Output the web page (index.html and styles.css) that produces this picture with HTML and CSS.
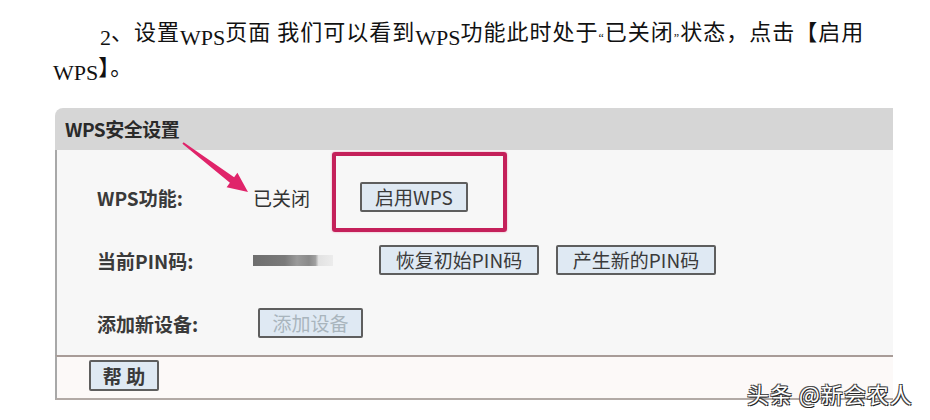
FILE: index.html
```html
<!DOCTYPE html>
<html lang="zh-CN">
<head>
<meta charset="utf-8">
<title>WPS安全设置</title>
<link rel="stylesheet" href="styles.css">
</head>
<body>
<p class="intro"><span class="lat">2</span>、设置<span class="lat">WPS</span>页面 我们可以看到<span class="lat">WPS</span>功能此时处于<span class="q">“</span>已关闭<span class="q">”</span>状态，点击【启用<br><span class="lat">WPS</span>】。</p>

<section class="panel">
  <header class="panel-head">WPS安全设置</header>
  <div class="panel-body">
    <div class="row">
      <span class="label">WPS功能:</span>
      <span class="state">已关闭</span>
      <button class="btn btn-enable">启用WPS</button>
    </div>
    <div class="row">
      <span class="label">当前PIN码:</span>
      <span class="pin-bar"></span>
      <button class="btn btn-pin">恢复初始PIN码</button>
      <button class="btn btn-pin">产生新的PIN码</button>
    </div>
    <div class="row">
      <span class="label">添加新设备:</span>
      <button class="btn btn-add" disabled>添加设备</button>
    </div>
  </div>
  <footer class="panel-foot">
    <button class="btn btn-help">帮 助</button>
  </footer>
  <div class="highlight"></div>
  <svg class="arrow" viewBox="0 0 85 65" width="85" height="65" aria-hidden="true">
    <polygon points="8.6,6.2 59.1,41.2 62.4,36.8 73,56 51.6,51.2 54.9,46.8 7.4,7.8" fill="#e0246a"/>
  </svg>
</section>

<div class="watermark">头条 @新会农人</div>
</body>
</html>
```

FILE: styles.css
```css
* { box-sizing: border-box; }

html, body {
  margin: 0;
  padding: 0;
  background: #ffffff;
}

body {
  position: relative;
  width: 930px;
  height: 420px;
  overflow: hidden;
  font-family: "Noto Sans CJK SC", "Noto Sans", sans-serif;
}

.intro {
  margin: 0 0 0 53px;
  padding-top: 16px;
  height: 108px;
  font-size: 22px;
  line-height: 29px;
  letter-spacing: 1px;
  color: #111;
  text-indent: 47px;
  white-space: nowrap;
}

.lat {
  font-family: "Liberation Serif", serif;
  font-size: 22px;
  letter-spacing: 0;
  position: relative;
  top: 5px;
}

.q {
  font-family: "Liberation Serif", serif;
  font-size: 12px;
  position: relative;
  top: 2px;
}

.panel {
  position: relative;
  margin-left: 55px;
  width: 838px;
}

.panel-head {
  height: 42px;
  background: #d6d6d6;
  border-top-left-radius: 8px;
  padding: 3px 0 0 10px;
  font-size: 19px;
  line-height: 36px;
  font-weight: 700;
  color: #2a2a2a;
  letter-spacing: -0.5px;
}

.panel-body {
  height: 205px;
  background: #f7f7f7;
  border-left: 2px solid #a8a8a8;
  padding: 32px 0 0 40px;
  display: flex;
  flex-direction: column;
  gap: 33px;
}

.row {
  display: flex;
  align-items: center;
  height: 30px;
}

.label {
  width: 156px;
  font-size: 19px;
  font-weight: 700;
  color: #3a3a3a;
}

.state {
  width: 107px;
  font-size: 19px;
  color: #333;
}

.pin-bar {
  width: 80px;
  height: 11px;
  margin-right: 46px;
  background: linear-gradient(90deg, #6e6e6e 0%, #7a7a7a 40%, #9a9a9a 55%, #8a8a8a 70%, #a0a0a0 78%, #e2e2e2 82%, #ececec 100%);
}

.btn {
  height: 30px;
  padding: 0;
  border: 2px solid #5e5e5e;
  border-radius: 2px;
  background: #dfe9f3;
  font-family: "Noto Sans CJK SC", "Noto Sans", sans-serif;
  font-size: 19px;
  line-height: 24px;
  color: #3a3a3a;
}

.btn-enable { width: 108px; }

.btn-pin { width: 160px; margin-right: 17px; }

.btn-add {
  width: 105px;
  margin-left: 5px;
  color: #a9b5bd;
}

.panel-foot {
  height: 45px;
  background: #fcf9f8;
  border-left: 2px solid #a8a8a8;
  border-top: 2px solid #a89c98;
  border-bottom: 2px solid #b2aaa6;
  padding: 3px 0 0 32px;
}

.btn-help {
  width: 70px;
  height: 31px;
  font-weight: 700;
}

.highlight {
  position: absolute;
  left: 277px;
  top: 44px;
  width: 175px;
  height: 80px;
  border: 4px solid #c4205a;
  border-radius: 3px;
  box-shadow: 0 0 2px rgba(230, 80, 130, 0.6);
}

.arrow {
  position: absolute;
  left: 120px;
  top: 28px;
  filter: blur(0.6px);
}

.watermark {
  position: absolute;
  left: 747px;
  top: 378px;
  font-size: 22px;
  line-height: 30px;
  letter-spacing: 1px;
  color: #ffffff;
  text-shadow: 1px 1px 0 #222, -1px -1px 0 #555, 1px -1px 0 #444, -1px 1px 0 #444;
}
```
